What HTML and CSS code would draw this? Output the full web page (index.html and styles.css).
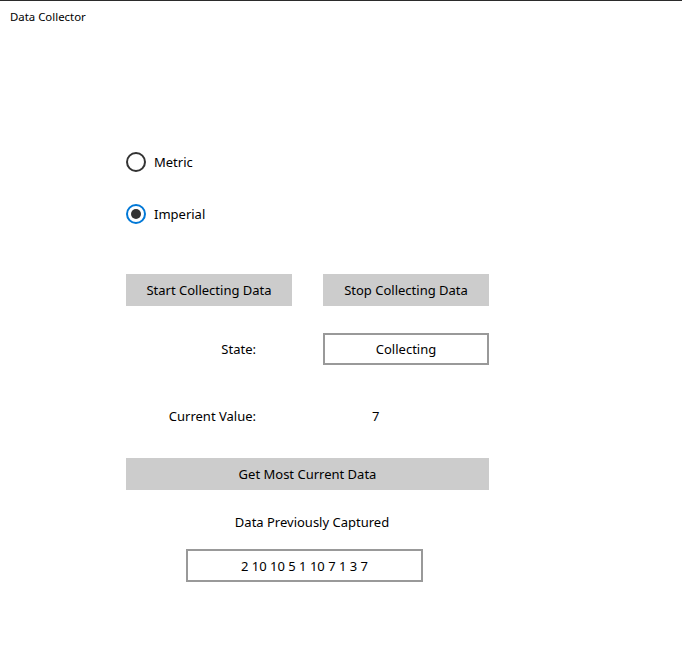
FILE: index.html
```html
<!DOCTYPE html>
<html>
<head>
<meta charset="utf-8">
<title>Data Collector</title>
<link rel="stylesheet" href="styles.css">
</head>
<body>
<div class="titlebar">Data Collector</div>
<main class="panel">
  <label class="radio">
    <span class="circle"></span>
    <span class="radio-text">Metric</span>
  </label>
  <label class="radio radio-second">
    <span class="circle checked"><span class="dot"></span></span>
    <span class="radio-text">Imperial</span>
  </label>
  <div class="button-row">
    <div class="btn">Start Collecting Data</div>
    <div class="btn">Stop Collecting Data</div>
  </div>
  <div class="field-row state-row">
    <div class="field-label">State:</div>
    <div class="field-box">Collecting</div>
  </div>
  <div class="field-row value-row">
    <div class="field-label">Current Value:</div>
    <div class="field-value">7</div>
  </div>
  <div class="btn btn-wide">Get Most Current Data</div>
  <div class="captured-title">Data Previously Captured</div>
  <div class="captured-box">2 10 10 5 1 10 7 1 3 7</div>
</main>
</body>
</html>
```
FILE: styles.css
```css
html, body {
  margin: 0;
  padding: 0;
  background: #ffffff;
}
body {
  border-top: 1px solid #2b2b2b;
  font-family: "Noto Sans", "Open Sans", sans-serif;
  color: #000000;
  height: 664px;
}
.titlebar {
  font-size: 11.4px;
  line-height: 16px;
  padding: 8px 0 0 10px;
}
.panel {
  margin-left: 126px;
  width: 363px;
  display: flex;
  flex-direction: column;
  font-size: 13px;
}
.radio {
  margin-top: 127px;
  display: flex;
  align-items: center;
  height: 20px;
  gap: 8px;
}
.radio-second {
  margin-top: 32px;
}
.circle {
  box-sizing: border-box;
  width: 20px;
  height: 20px;
  border: 2px solid #333333;
  border-radius: 50%;
  display: flex;
  align-items: center;
  justify-content: center;
}
.circle.checked {
  border-color: #0078d7;
}
.dot {
  width: 10px;
  height: 10px;
  border-radius: 50%;
  background: #333333;
}
.radio-text {
  line-height: 20px;
}
.button-row {
  margin-top: 50px;
  display: grid;
  grid-template-columns: 166px 166px;
  column-gap: 31px;
}
.btn {
  height: 32px;
  background: #cccccc;
  display: flex;
  align-items: center;
  justify-content: center;
}
.field-row {
  display: grid;
  grid-template-columns: 166px 166px;
  column-gap: 31px;
  height: 32px;
  align-items: center;
}
.state-row {
  margin-top: 27px;
}
.value-row {
  margin-top: 35px;
}
.field-label {
  text-align: right;
  padding-right: 36px;
}
.field-box {
  box-sizing: border-box;
  height: 32px;
  border: 2px solid #999999;
  display: flex;
  align-items: center;
  justify-content: center;
}
.field-value {
  padding-left: 49px;
}
.btn-wide {
  margin-top: 26px;
}
.captured-title {
  margin-top: 22px;
  line-height: 20px;
  text-align: center;
  padding-left: 9px;
}
.captured-box {
  box-sizing: border-box;
  margin-top: 17px;
  margin-left: 60px;
  width: 237px;
  height: 33px;
  border: 2px solid #999999;
  display: flex;
  align-items: center;
  justify-content: center;
}
```
